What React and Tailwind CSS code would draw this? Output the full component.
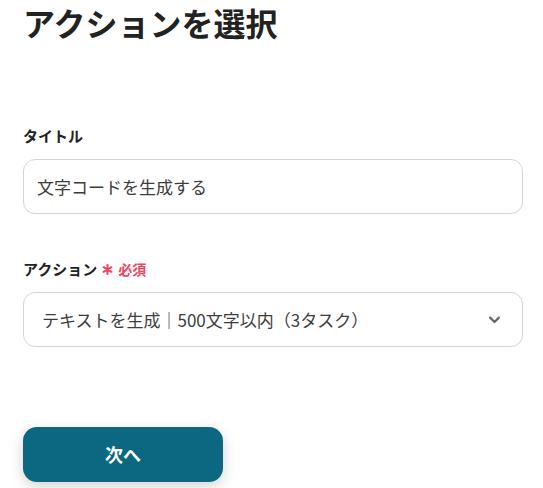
export default function App() {
  return (
    <div className="w-[543px] h-[488px] bg-white overflow-hidden px-[23px]" style={{ fontFamily: '"Noto Sans CJK JP", "Noto Sans", sans-serif' }}>
      <h1 className="text-[32px] leading-[44px] font-bold text-[#222222] pt-0 mt-0">アクションを選択</h1>
      <div className="mt-[80px]">
        <div className="text-[15px] leading-[24px] font-bold text-[#222222]">タイトル</div>
        <div className="mt-[11px] h-[55px] w-[500px] rounded-[12px] border border-[#d1d5db] flex items-center px-[13px] text-[17px] text-[#3d3d3d]">
          文字コードを生成する
        </div>
      </div>
      <div className="mt-[43px]">
        <div className="flex items-center text-[15px] leading-[24px] font-bold text-[#222222]">
          アクション
          <svg className="ml-[5px]" width="11" height="11" viewBox="0 0 12 12" fill="none" stroke="#ec4760" strokeWidth="2.2" strokeLinecap="round">
            <path d="M6 1v10M1.7 3.5l8.6 5M1.7 8.5l8.6-5" />
          </svg>
          <span className="ml-[5px] text-[#ec4760] text-[14px] font-bold">必須</span>
        </div>
        <div className="mt-[11px] h-[55px] w-[500px] rounded-[12px] border border-[#d1d5db] flex items-center justify-between pl-[18px] pr-[20px] text-[17px] text-[#3d3d3d]">
          <span>テキストを生成｜500文字以内（3タスク）</span>
          <svg width="15" height="15" viewBox="0 0 24 24" fill="none" stroke="#666" strokeWidth="3.5" strokeLinecap="round" strokeLinejoin="round"><path d="M5 9l7 7 7-7" /></svg>
        </div>
      </div>
      <button className="mt-[80px] w-[200px] h-[55px] rounded-[14px] bg-[#0b6880] text-white text-[18px] font-bold shadow-[0_4px_14px_rgba(0,0,0,0.18)]">次へ</button>
    </div>
  );
}
